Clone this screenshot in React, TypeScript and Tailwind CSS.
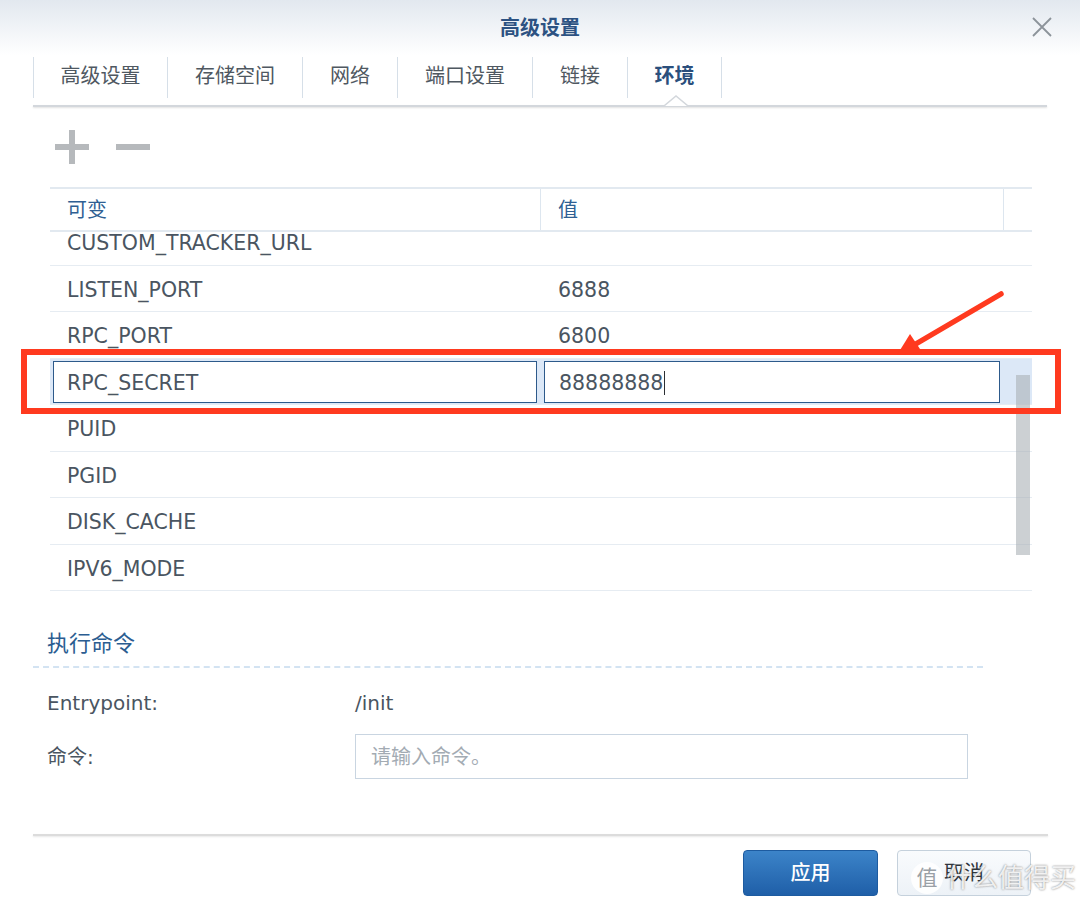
import React from 'react';

interface EnvRow {
  name: string;
  value: string;
  editing?: boolean;
}

const tabs = [
  { label: '高级设置', w: 'w-[135px]' },
  { label: '存储空间', w: 'w-[135px]' },
  { label: '网络', w: 'w-[95px]' },
  { label: '端口设置', w: 'w-[135px]' },
  { label: '链接', w: 'w-[95px]' },
  { label: '环境', w: 'w-[94px]', active: true },
];

const rows: EnvRow[] = [
  { name: 'CUSTOM_TRACKER_URL', value: '' },
  { name: 'LISTEN_PORT', value: '6888' },
  { name: 'RPC_PORT', value: '6800' },
  { name: 'RPC_SECRET', value: '88888888', editing: true },
  { name: 'PUID', value: '' },
  { name: 'PGID', value: '' },
  { name: 'DISK_CACHE', value: '' },
  { name: 'IPV6_MODE', value: '' },
];

const EnvTableRow: React.FC<{ row: EnvRow }> = ({ row }) => {
  if (row.editing) {
    return (
      <div className="grid grid-cols-[491px_463px_28px] h-[46.5px] bg-[#dce8f7] border-b border-[#e6ecf2]">
        <div className="pl-[3px] pr-[4px] pt-[2px] pb-[1px]">
          <div className="h-full border-[1.5px] border-[#2d5a8b] bg-white flex items-center pl-[13px] pt-[3px]">{row.name}</div>
        </div>
        <div className="pl-[3px] pr-[4px] pt-[2px] pb-[1px]">
          <div className="h-full border-[1.5px] border-[#2d5a8b] bg-white flex items-center pl-[14px] pt-[3px]">
            {row.value}
            <span className="w-px h-[24px] bg-[#2b2f33] ml-[1px]" />
          </div>
        </div>
        <div />
      </div>
    );
  }
  return (
    <div className="grid grid-cols-[491px_463px_28px] h-[46.5px] border-b border-[#e6ecf2] items-center pt-[4px]">
      <div className="pl-[17px]">{row.name}</div>
      <div className="pl-[17px]">{row.value}</div>
      <div />
    </div>
  );
};

export default function App() {
  return (
    <div className="w-[1080px] h-[907px] relative overflow-hidden bg-white font-['DejaVu_Sans','Noto_Sans_CJK_SC',sans-serif] text-[20px] text-[#4a5561]">
      {/* title bar */}
      <div className="h-[55px] grid grid-cols-[1fr_auto_1fr] items-center bg-gradient-to-b from-[#e2e8ef] to-white">
        <div />
        <div className="font-bold text-[#2c5282] text-[20px] leading-none">高级设置</div>
        <div className="flex justify-end pr-[27px]">
          <svg width="22" height="22" viewBox="0 0 22 22" className="-mt-[1px]">
            <path d="M2 2 L20 20 M20 2 L2 20" stroke="#8c939a" strokeWidth="1.8" />
          </svg>
        </div>
      </div>

      {/* tabs */}
      <div className="h-[50px] pt-[2px] pl-[33px] flex items-start">
        {tabs.map((t, i) => (
          <div
            key={t.label}
            className={`${t.w} h-[41px] pb-[4px] flex items-center justify-center border-r border-[#d6dfe8] ${i === 0 ? 'border-l' : ''} ${t.active ? 'font-bold text-[#2b4f7c]' : 'text-[#4f5861]'}`}
          >
            {t.label}
          </div>
        ))}
      </div>
      <div className="ml-[33px] w-[1014px] h-[2px] bg-[#d3d7dc] shadow-[0_1px_2px_rgba(0,0,0,0.12)] relative">
        <svg width="24" height="12" viewBox="0 0 24 12" className="absolute left-[631px] -top-[10px]">
          <path d="M0 11 L12 1 L24 11 Z" fill="white" />
          <path d="M0 11 L12 1 L24 11" fill="none" stroke="#d3d7dc" strokeWidth="1.5" />
        </svg>
      </div>

      {/* toolbar */}
      <div className="h-[80px] pl-[55px] flex items-center gap-[27px]">
        <svg width="34" height="34" viewBox="0 0 34 34">
          <path d="M17 1 V33 M1 17 H33" stroke="#b6b9bc" strokeWidth="6" strokeLinecap="round" />
        </svg>
        <svg width="34" height="34" viewBox="0 0 34 34">
          <path d="M1 17 H33" stroke="#b6b9bc" strokeWidth="6" strokeLinecap="round" />
        </svg>
      </div>

      {/* env table */}
      <div className="ml-[50px] w-[982px]">
        <div className="grid grid-cols-[491px_463px_28px] h-[45px] border-t-2 border-b-2 border-[#e2e9f0] items-center text-[#2f5f93]">
          <div className="pl-[17px] h-full flex items-center border-r border-[#dde6ef]">可变</div>
          <div className="pl-[17px] h-full flex items-center border-r border-[#dde6ef]">值</div>
          <div />
        </div>
        <div className="h-[359px] overflow-hidden relative text-[20.5px]">
          <div className="-mt-[13px]">
            {rows.map((r) => (
              <EnvTableRow key={r.name} row={r} />
            ))}
          </div>
          <div className="absolute left-[966px] top-[143px] w-[14px] h-[180px] bg-[#aab0b6]/60" />
        </div>
      </div>

      {/* execute command */}
      <div className="mt-[37px] pl-[47px] h-[30px] flex items-center text-[22px] text-[#2b5d91]">执行命令</div>
      <div className="ml-[33px] mt-[8px] w-[950px] border-t-2 border-dashed border-[#d3e3f2]" />

      <div className="mt-[20px] pl-[47px] grid grid-cols-[308px_613px] items-center h-[24px]">
        <div>Entrypoint:</div>
        <div>/init</div>
      </div>
      <div className="mt-[22px] pl-[47px] grid grid-cols-[308px_613px] items-center h-[45px]">
        <div>命令:</div>
        <div className="h-full border-[1.5px] border-[#c9d5e1] flex items-center pl-[15px] text-[#a3abb3]">请输入命令。</div>
      </div>

      <div className="ml-[33px] mt-[55px] w-[1015px] h-[2px] bg-[#dcdcdc] shadow-[0_1px_2px_rgba(0,0,0,0.1)]" />

      {/* footer buttons */}
      <div className="mt-[14px] flex justify-end gap-[19px] pr-[49px]">
        <button className="w-[135px] h-[46px] rounded-[4px] border border-[#1d5ba0] bg-gradient-to-b from-[#3c84c9] to-[#1f5fa8] text-white font-medium">应用</button>
        <button className="w-[134px] h-[46px] rounded-[4px] border border-[#c5d1dc] bg-gradient-to-b from-[#f9fbfd] to-[#edf2f7] text-[#2f353b]">取消</button>
      </div>

      {/* annotation: red box + arrow */}
      <div className="absolute left-[21px] top-[349px] w-[1040px] h-[65px] border-[6px] border-[#ff3a1f] pointer-events-none" />
      <svg className="absolute left-0 top-0 pointer-events-none" width="1080" height="907">
        <line x1="1001" y1="294" x2="914" y2="345" stroke="#ff3a1f" strokeWidth="5.5" strokeLinecap="round" />
        <polygon points="897,355 910,334 922,352" fill="#ff3a1f" />
      </svg>

      {/* watermark */}
      <div className="absolute left-[911px] top-[862px] flex items-center gap-[3px] whitespace-nowrap pointer-events-none">
        <div className="w-[32px] h-[32px] shrink-0 rounded-full bg-white/90 flex items-center justify-center text-[21px] leading-none text-[#9aa0a6]">值</div>
        <div className="text-[26px] leading-none text-white/85 [text-shadow:0_0_2px_rgba(80,80,80,0.8)]">什么值得买</div>
      </div>
    </div>
  );
}
